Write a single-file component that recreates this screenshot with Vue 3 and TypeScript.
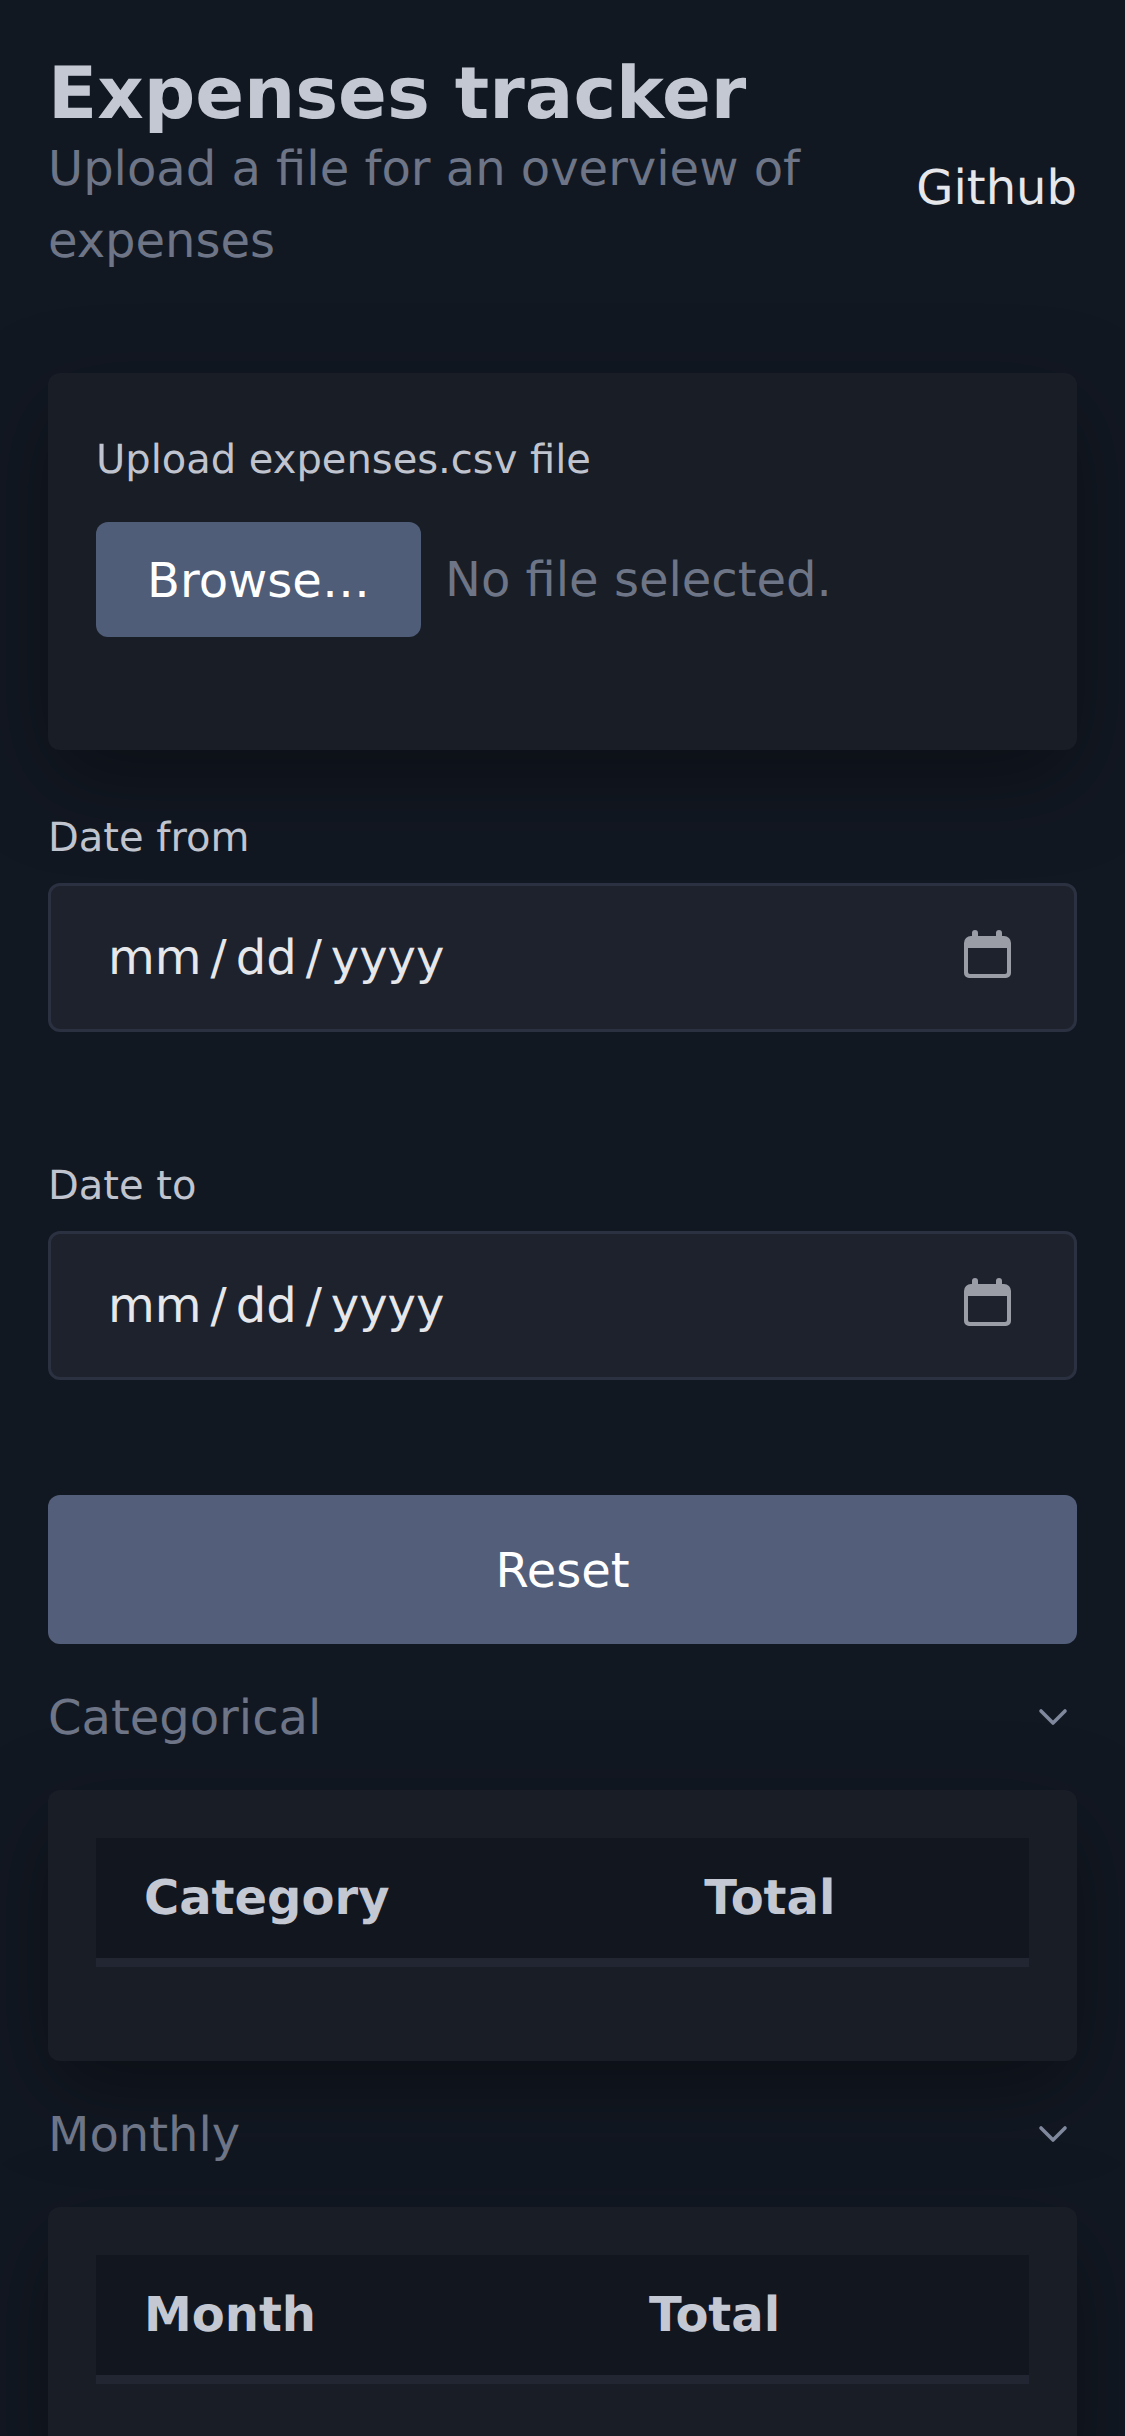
<template>
  <div class="page">
    <header class="top">
      <div class="intro">
        <h1>Expenses tracker</h1>
        <p>Upload a file for an overview of expenses</p>
      </div>
      <a class="repo">Github</a>
    </header>

    <section class="card upload">
      <div class="label">Upload expenses.csv file</div>
      <div class="file-row">
        <button class="browse">Browse…</button>
        <span class="file-name">No file selected.</span>
      </div>
    </section>

    <div v-for="field in dateFields" :key="field" class="date-group">
      <div class="label">{{ field }}</div>
      <div class="date-input">
        <div class="date-text">
          <span>mm</span><span>/</span><span>dd</span><span>/</span><span>yyyy</span>
        </div>
        <svg class="calendar" viewBox="0 0 47 48" width="47" height="48">
          <path d="M8 3a3 3 0 0 1 6 0v3h18V3a3 3 0 0 1 6 0v3h2a7 7 0 0 1 7 7v30a5 5 0 0 1-5 5H5a5 5 0 0 1-5-5V13a7 7 0 0 1 7-7h1zM4 18v24a2 2 0 0 0 2 2h35a2 2 0 0 0 2-2V18z" fill="#9a9da6" fill-rule="evenodd" />
        </svg>
      </div>
    </div>

    <button class="reset">Reset</button>

    <section v-for="block in blocks" :key="block.title" class="block">
      <div class="block-head">
        <span class="block-title">{{ block.title }}</span>
        <svg viewBox="0 0 30 30" width="30" height="30">
          <path d="M3 9l12 12L27 9" fill="none" stroke="#7f889c" stroke-width="3.6" stroke-linecap="round" stroke-linejoin="round" />
        </svg>
      </div>
      <div class="card table-card">
        <table>
          <thead>
            <tr>
              <th>{{ block.column }}</th>
              <th>Total</th>
            </tr>
          </thead>
        </table>
      </div>
    </section>
  </div>
</template>

<script setup lang="ts">
const dateFields = ['Date from', 'Date to']

const blocks = [
  { title: 'Categorical', column: 'Category' },
  { title: 'Monthly', column: 'Month' }
]
</script>

<style>
html,
body {
  background: #121822;
}
body {
  height: 2436px;
  overflow: hidden;
}
</style>

<style scoped>
.page {
  padding: 48px 48px 0;
  font-family: 'DejaVu Sans', sans-serif;
  color: #e5e7eb;
  text-rendering: geometricPrecision;
}

.top {
  display: flex;
  justify-content: space-between;
  align-items: center;
}

.intro {
  width: 800px;
}

h1 {
  margin: 0;
  font-size: 72px;
  line-height: 90px;
  font-weight: 700;
  color: #c4c8d2;
}

.intro p {
  margin: -5px 0 0;
  font-size: 48px;
  line-height: 72px;
  color: #6d7587;
}

.repo {
  margin-top: 50px;
  font-size: 48px;
  color: #e5e7eb;
}

.card {
  background: #181d26;
  border-radius: 12px;
  box-shadow: 0 30px 90px rgba(0, 0, 0, 0.35);
}

.upload {
  margin-top: 96px;
  padding: 57px 48px 48px;
  height: 377px;
  box-sizing: border-box;
}

.label {
  font-size: 40px;
  line-height: 60px;
  color: #c0c4ce;
}

.file-row {
  display: flex;
  align-items: center;
  gap: 24px;
  margin-top: 32px;
}

.browse {
  width: 325px;
  height: 115px;
  padding: 0;
  border: none;
  border-radius: 12px;
  background: #4f5d78;
  color: #fff;
  font: inherit;
  font-size: 48px;
}

.file-name {
  font-size: 48px;
  color: #6d7587;
}

.date-group {
  margin-top: 58px;
  margin-bottom: 124px;
}

.date-group:last-of-type {
  margin-bottom: 0;
}

.date-input {
  display: flex;
  align-items: center;
  justify-content: space-between;
  height: 149px;
  box-sizing: border-box;
  margin-top: 15px;
  padding: 0 63px 0 57px;
  background: #1e222d;
  border: 3px solid #2b3140;
  border-radius: 12px;
  font-size: 48px;
  color: #e5e7eb;
}

.date-text {
  display: flex;
  gap: 9px;
}

.calendar {
  margin-top: -7px;
}

.reset {
  display: block;
  width: 100%;
  height: 149px;
  margin-top: 115px;
  border: none;
  border-radius: 12px;
  background: #535f7a;
  color: #fff;
  font: inherit;
  font-size: 48px;
}

.block-head {
  display: flex;
  align-items: center;
  justify-content: space-between;
  margin-top: 44px;
  padding-right: 9px;
  font-size: 48px;
  line-height: 56px;
  color: #6d7587;
}

.block-title {
  padding-top: 2px;
}

.table-card {
  margin-top: 44px;
  padding: 48px;
  height: 271px;
  box-sizing: border-box;
}

table {
  width: 100%;
  border-collapse: collapse;
  background: #12161f;
}

th {
  height: 120px;
  padding: 0 48px;
  border-bottom: 9px solid #222633;
  text-align: left;
  font-size: 48px;
  font-weight: 700;
  color: #c4c8d2;
}
</style>
